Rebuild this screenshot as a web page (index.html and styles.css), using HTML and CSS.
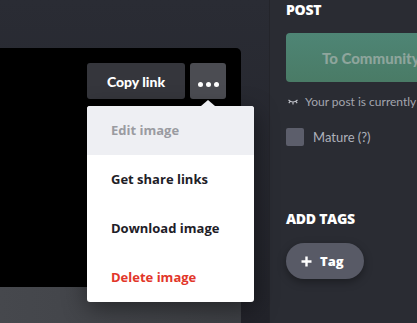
FILE: index.html
```html
<!DOCTYPE html>
<html lang="en">
<head>
    <meta charset="UTF-8">
    <title>Post image</title>
    <link rel="stylesheet" href="styles.css">
</head>
<body>
    <div class="page">
        <div class="main">
            <div class="viewer">
                <div class="viewer-actions">
                    <button class="btn-copy">Copy link</button>
                    <button class="btn-more"><span></span><span></span><span></span></button>
                </div>
                <ul class="menu">
                    <li class="menu-item active">Edit image</li>
                    <li class="menu-item">Get share links</li>
                    <li class="menu-item">Download image</li>
                    <li class="menu-item danger">Delete image</li>
                </ul>
            </div>
            <div class="viewer-foot"></div>
        </div>
        <div class="sidebar">
            <h2 class="side-title">POST</h2>
            <button class="btn-community">To Community</button>
            <div class="notice">
                <svg class="eye" width="10" height="6" viewBox="0 0 10 6">
                    <path d="M0.5 1 Q5 5 9.5 1 M2 2.6 L0.8 4.2 M5 3.5 L5 5.5 M8 2.6 L9.2 4.2" stroke="#c3c5cc" stroke-width="1.1" fill="none"/>
                </svg>
                <span>Your post is currently hidden</span>
            </div>
            <label class="mature"><span class="check"></span>Mature (?)</label>
            <h2 class="side-title tags-title">ADD TAGS</h2>
            <button class="btn-tag">
                <svg width="11" height="11" viewBox="0 0 11 11">
                    <path d="M5.5 0.5 V10.5 M0.5 5.5 H10.5" stroke="#fff" stroke-width="2.4"/>
                </svg>
                <span>Tag</span>
            </button>
        </div>
    </div>
</body>
</html>
```

FILE: styles.css
```css
* {
    box-sizing: border-box;
}
body {
    margin: 0;
    width: 417px;
    height: 323px;
    overflow: hidden;
    font-family: Lato, "Open Sans", sans-serif;
    background: #25262d;
}
.page {
    display: flex;
    height: 323px;
    background: linear-gradient(180deg, #2a2c34 0%, #22232a 100%);
}
.main {
    width: 270px;
    flex-shrink: 0;
    padding-top: 48px;
}
.viewer {
    position: relative;
    width: 241px;
    height: 239px;
    background: #000;
    border-top-right-radius: 5px;
}
.viewer-actions {
    display: flex;
    justify-content: flex-end;
    gap: 5px;
    padding: 15px 15px 0 0;
}
.btn-copy,
.btn-more {
    border: none;
    border-radius: 3px;
    height: 36px;
    color: #fff;
    font-family: inherit;
    cursor: pointer;
}
.btn-copy {
    width: 98px;
    background: #35363c;
    font-size: 14px;
    font-weight: 900;
}
.btn-more {
    width: 36px;
    background: #4b4c52;
    display: flex;
    justify-content: center;
    align-items: center;
    gap: 3px;
    padding: 6px 0 0;
}
.btn-more span {
    width: 5px;
    height: 5px;
    border-radius: 50%;
    background: #fff;
}
.menu {
    position: absolute;
    top: 58px;
    left: 87px;
    width: 167px;
    margin: 0;
    padding: 0;
    list-style: none;
    background: #fff;
    border-radius: 3px;
    box-shadow: 0 6px 24px rgba(0, 0, 0, 0.45);
}
.menu::before {
    content: "";
    position: absolute;
    top: -6px;
    left: 114px;
    border-left: 7px solid transparent;
    border-right: 7px solid transparent;
    border-bottom: 6px solid #eeeff3;
}
.menu-item {
    height: 49px;
    line-height: 49px;
    padding-left: 24px;
    font-family: "Open Sans", sans-serif;
    font-size: 13px;
    font-weight: 700;
    color: #1e2027;
}
.menu-item.active {
    background: #eeeff3;
    color: #9a9ba1;
    border-radius: 3px 3px 0 0;
}
.menu-item.danger {
    color: #e2362a;
}
.viewer-foot {
    width: 241px;
    height: 36px;
    background: linear-gradient(90deg, #46484d 0%, #3e4045 100%);
}
.sidebar {
    flex: 1;
    padding: 0 0 0 16px;
    background: #2a2c33;
    border-left: 1px solid #24252b;
    margin-left: -1px;
    white-space: nowrap;
    overflow: hidden;
}
.side-title {
    margin: 0;
    font-family: "Open Sans", sans-serif;
    font-size: 14px;
    font-weight: 800;
    line-height: 20px;
    color: #fff;
    letter-spacing: -0.3px;
}
.btn-community {
    display: block;
    margin-top: 13px;
    width: 160px;
    height: 49px;
    border: none;
    border-radius: 4px;
    background: linear-gradient(180deg, #4e8575 0%, #4a7b66 100%);
    color: #8ea59c;
    font-family: Lato, sans-serif;
    font-size: 15px;
    font-weight: 900;
    text-align: left;
    padding-left: 36px;
}
.notice {
    display: flex;
    align-items: center;
    gap: 7px;
    margin-top: 12px;
    padding-left: 2px;
    font-size: 12px;
    color: #a3a5ae;
}
.eye {
    flex-shrink: 0;
}
.mature {
    display: flex;
    align-items: center;
    gap: 9px;
    margin-top: 19px;
    font-size: 13px;
    color: #aeb1bb;
}
.check {
    width: 18px;
    height: 18px;
    border-radius: 2px;
    background: #5c5e6b;
}
.tags-title {
    margin-top: 63px;
}
.btn-tag {
    display: flex;
    align-items: center;
    gap: 8px;
    margin-top: 14px;
    width: 78px;
    height: 36px;
    border: none;
    border-radius: 18px;
    padding-left: 15px;
    background: #585a66;
    box-shadow: 0 3px 8px rgba(0, 0, 0, 0.35);
    color: #fff;
    font-family: "Open Sans", sans-serif;
    font-size: 13px;
    font-weight: 800;
}
```
